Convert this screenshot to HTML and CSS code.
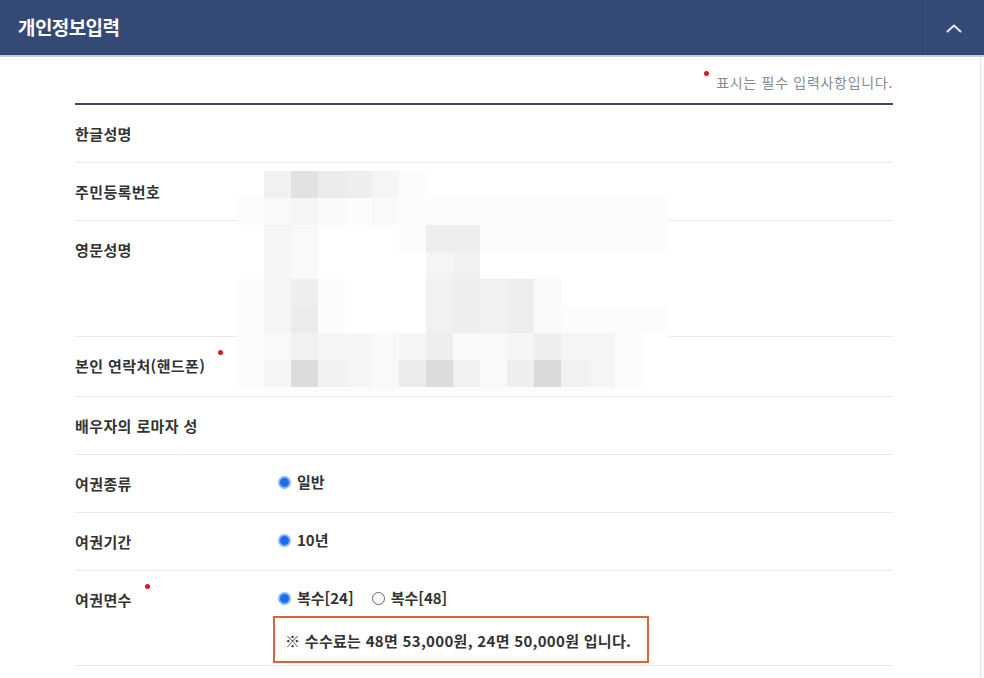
FILE: index.html
```html
<!DOCTYPE html>
<html lang="ko">
<head>
    <meta charset="UTF-8">
    <meta name="viewport" content="width=device-width, initial-scale=1.0">
    <title>개인정보입력</title>
    <link rel="stylesheet" href="styles.css">
</head>
<body>
    <header class="panel-header">
        <h2 class="panel-title">개인정보입력</h2>
        <button class="toggle-btn" type="button" aria-label="접기">
            <svg width="18" height="10" viewBox="0 0 18 10">
                <polyline points="2.5,8.5 9,2.5 15.5,8.5" fill="none" stroke="#e3e8f2" stroke-width="2" stroke-linecap="round" stroke-linejoin="round"/>
            </svg>
        </button>
    </header>

    <section class="panel-body">
        <p class="required-note"><span class="req-dot"></span>표시는 필수 입력사항입니다.</p>

        <div class="form-table">
            <div class="form-row">
                <div class="form-label">한글성명</div>
                <div class="form-value"></div>
            </div>
            <div class="form-row">
                <div class="form-label">주민등록번호</div>
                <div class="form-value"></div>
            </div>
            <div class="form-row row-tall">
                <div class="form-label">영문성명</div>
                <div class="form-value"></div>
            </div>
            <div class="form-row row-phone">
                <div class="form-label">본인 연락처(핸드폰)<span class="req-dot label-dot"></span></div>
                <div class="form-value"></div>
            </div>
            <div class="form-row">
                <div class="form-label">배우자의 로마자 성</div>
                <div class="form-value"></div>
            </div>
            <div class="form-row">
                <div class="form-label">여권종류</div>
                <div class="form-value">
                    <div class="radio-group">
                        <label class="radio"><span class="radio-mark checked"></span>일반</label>
                    </div>
                </div>
            </div>
            <div class="form-row">
                <div class="form-label">여권기간</div>
                <div class="form-value">
                    <div class="radio-group">
                        <label class="radio"><span class="radio-mark checked"></span>10년</label>
                    </div>
                </div>
            </div>
            <div class="form-row row-pages">
                <div class="form-label">여권면수<span class="req-dot label-dot"></span></div>
                <div class="form-value">
                    <div class="radio-group">
                        <label class="radio"><span class="radio-mark checked"></span>복수[24]</label>
                        <label class="radio"><span class="radio-mark"></span>복수[48]</label>
                    </div>
                    <p class="fee-box">※ 수수료는 48면 53,000원, 24면 50,000원 입니다.</p>
                </div>
            </div>

            <!-- personal data blurred out -->
            <div class="mosaic" id="mosaic"></div>
        </div>
    </section>

    <script src="mosaic.js"></script>
</body>
</html>
```

FILE: styles.css
```css
/* Base */
* {
    margin: 0;
    padding: 0;
    box-sizing: border-box;
}

body {
    background-color: #fff;
    color: #333;
    font-family: "Noto Sans CJK KR", "Noto Sans", sans-serif;
}

/* Header */
.panel-header {
    display: flex;
    align-items: stretch;
    height: 57px;
    background-color: #344a75;
    border-bottom: 2px solid #c8cfdc;
}

.panel-title {
    flex: 1;
    display: flex;
    align-items: center;
    padding-left: 18px;
    padding-bottom: 2px;
    font-size: 19px;
    font-weight: 700;
    letter-spacing: -0.6px;
    color: #fff;
}

.toggle-btn {
    width: 62px;
    display: flex;
    align-items: center;
    justify-content: center;
    background: none;
    border: none;
    border-left: 1px solid #2d4168;
    cursor: pointer;
}

/* Body */
.panel-body {
    width: 981px;
    min-height: 621px;
    padding: 15px 0 0 75px;
    border-right: 1px solid #e4e4e4;
}

.required-note {
    width: 818px;
    height: 20px;
    margin-bottom: 11px;
    text-align: right;
    font-size: 14px;
    line-height: 20px;
    letter-spacing: 0.7px;
    color: #8a8a8a;
}

.req-dot {
    display: inline-block;
    width: 5px;
    height: 5px;
    margin-right: 7px;
    border-radius: 50%;
    background-color: #e2122b;
    vertical-align: top;
}

.required-note .req-dot {
    position: relative;
    top: -1px;
}

.label-dot {
    position: relative;
    top: -6px;
    margin: 0 0 0 13px;
}

/* Form table */
.form-table {
    position: relative;
    width: 818px;
    border-top: 2px solid #3e4961;
}

.form-row {
    display: flex;
    padding: 19px 0 18px;
    border-bottom: 1px solid #ebebeb;
}

.form-label {
    width: 203px;
    flex-shrink: 0;
    font-size: 15px;
    font-weight: 600;
    line-height: 20px;
    letter-spacing: 0.4px;
    color: #333;
}

.form-value {
    flex: 1;
    min-height: 20px;
    font-size: 15px;
    line-height: 20px;
}

.row-tall {
    padding-bottom: 76px;
}

.row-phone {
    padding-bottom: 20px;
}

.row-pages {
    padding-bottom: 2px;
}

/* Radios */
.radio-group {
    display: flex;
    gap: 18px;
    height: 20px;
    margin-top: -2px;
}

.radio {
    display: flex;
    align-items: center;
    gap: 6px;
    font-size: 15px;
    font-weight: 600;
    line-height: 20px;
    color: #333;
}

.radio-mark {
    width: 13px;
    height: 13px;
    border-radius: 50%;
    border: 1px solid #666;
    background-color: #fff;
}

.radio-mark.checked {
    border: 2px solid #86b6f6;
    background-color: #1c6de6;
}

.fee-box {
    width: 376px;
    height: 47px;
    margin: 8px 0 0 -5px;
    padding: 0 10px;
    border: 2px solid #d9623f;
    font-size: 15px;
    font-weight: 600;
    line-height: 45px;
    letter-spacing: 0.3px;
    color: #333;
    white-space: nowrap;
}

/* Mosaic over hidden values */
.mosaic {
    position: absolute;
    left: 162px;
    top: 66px;
    display: grid;
    grid-template-columns: repeat(16, 27px);
    grid-template-rows: repeat(8, 27px) 8px;
}

.tile { background-color: #fff; }
.t1 { background-color: #fcfcfc; }
.t2 { background-color: #f9f9f8; }
.t3 { background-color: #f5f5f4; }
.t4 { background-color: #f1f1f1; }
.t5 { background-color: #eeeeed; }
.t6 { background-color: #ebebeb; }
.t7 { background-color: #e2e2e2; }
.t8 { background-color: #dcdcdc; }
.t9 { background-color: #d9d9d9; }
```

FILE: mosaic.js
```js
// shade levels of the blurred block, one string per row
var rows = [
    "0476531000000000",
    "1232121111111111",
    "0320001551111111",
    "0320000340000000",
    "1351000454520000",
    "1361000454521111",
    "1243323522353310",
    "1384326842594310",
    "0111111111111100"
];

var mosaic = document.getElementById('mosaic');

rows.forEach(function (row) {
    row.split('').forEach(function (level) {
        var tile = document.createElement('span');
        tile.className = 'tile t' + level;
        mosaic.appendChild(tile);
    });
});
```
